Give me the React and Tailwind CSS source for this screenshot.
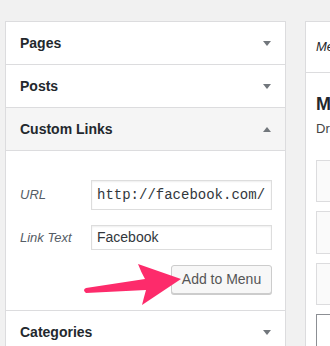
import React from "react";

function Tri({ up }) {
  return (
    <svg width="8" height="5" viewBox="0 0 8 5" className="block">
      {up ? <path d="M0 5 L4 0 L8 5 Z" fill="#72777c" /> : <path d="M0 0 L8 0 L4 5 Z" fill="#72777c" />}
    </svg>
  );
}

function Header({ title, up, active }) {
  return (
    <div
      className={
        "h-[43px] flex items-center justify-between pl-[14px] pr-[14px] border-b border-[#dcdcde] " +
        (active ? "bg-[#f5f5f5]" : "bg-white")
      }
    >
      <span className="text-[14px] font-bold text-[#23282d]">{title}</span>
      <Tri up={up} />
    </div>
  );
}

export default function App() {
  return (
    <div className="relative w-[330px] h-[346px] overflow-hidden bg-[#f1f1f1] font-['Liberation_Sans',sans-serif]">
      <div className="flex items-start pt-[21px] pl-[5px] gap-[19px]">
        <div className="w-[281px] shrink-0 bg-white border border-b-0 border-[#dcdcde]">
          <Header title="Pages" />
          <Header title="Posts" />
          <Header title="Custom Links" up active />
          <div className="border-b border-[#dcdcde] pt-[29px] pb-[16px] pl-[14px] pr-[13px]">
            <div className="flex items-center">
              <span className="w-[71px] text-[13px] italic text-[#555d66]">URL</span>
              <div className="w-[181px] h-[30px] border border-[#dddddd] shadow-[inset_0_1px_2px_rgba(0,0,0,0.07)] flex items-center pl-[5px] overflow-hidden whitespace-nowrap">
                <span className="font-['Liberation_Mono',monospace] text-[14px] text-[#32373c]">http://facebook.com/</span>
              </div>
            </div>
            <div className="flex items-center mt-[15px]">
              <span className="w-[71px] text-[13px] italic text-[#555d66]">Link Text</span>
              <div className="w-[181px] h-[25px] border border-[#dddddd] shadow-[inset_0_1px_2px_rgba(0,0,0,0.07)] flex items-center pl-[5px]">
                <span className="text-[14px] text-[#32373c]">Facebook</span>
              </div>
            </div>
            <div className="flex justify-end mt-[15px]">
              <div className="w-[101px] h-[29px] rounded-[3px] border border-[#cccccc] bg-[#f7f7f7] shadow-[0_1px_0_#cccccc] flex items-center justify-center">
                <span className="text-[14px] text-[#555555]">Add to Menu</span>
              </div>
            </div>
          </div>
          <Header title="Categories" />
        </div>
        <div className="w-[220px] shrink-0 bg-white border border-[#dcdcde] h-[360px]">
          <div className="h-[51px] border-b border-[#dcdcde] flex items-center pl-[10px]">
            <span className="text-[13px] italic text-[#23282d] whitespace-nowrap">Menu Name</span>
          </div>
          <div className="pl-[10px] pt-[20px]">
            <div className="text-[18px] leading-[22px] font-bold text-[#23282d] whitespace-nowrap">Menu Structure</div>
            <div className="text-[13px] leading-[18px] mt-[5px] text-[#444] whitespace-nowrap">Drag each item into the order you prefer.</div>
            <div className="mt-[22px] flex flex-col gap-[9px]">
              <div className="h-[42px] w-[200px] border border-[#dcdcde] bg-[#fafafa]" />
              <div className="h-[43px] w-[200px] border border-[#dcdcde] bg-[#fafafa]" />
              <div className="h-[42px] w-[200px] border border-[#dcdcde] bg-[#fafafa]" />
              <div className="h-[42px] w-[200px] border border-[#8c8f94] bg-white" />
            </div>
          </div>
        </div>
      </div>
      <svg className="absolute left-0 top-0" width="330" height="346" viewBox="0 0 330 346">
        <path
          d="M181 279 L138 264 Q141 272 145 279 L86 288 Q82 290 86 293 L146 290 Q144 297 142 305 Z"
          fill="#fd2b6b"
        />
      </svg>
    </div>
  );
}
